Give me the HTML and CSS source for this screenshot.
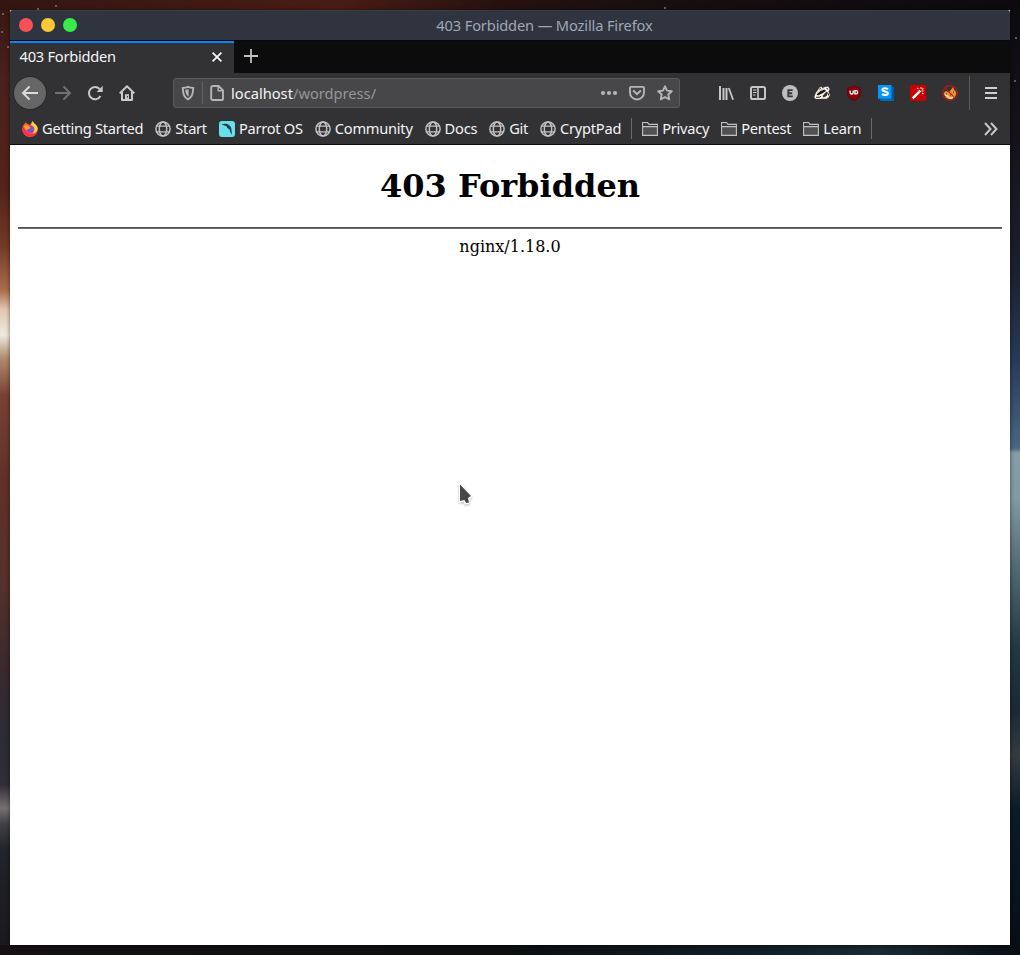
FILE: index.html
```html
<!DOCTYPE html>
<html lang="en">
<head>
<meta charset="utf-8">
<title>403 Forbidden</title>
<link rel="stylesheet" href="styles.css">
</head>
<body>
<svg class="defs" width="0" height="0">
  <symbol id="globe" viewBox="0 0 16 16"><g fill="none" stroke="#c2c2c3" stroke-width="1.5"><circle cx="8" cy="8" r="7.1"/><ellipse cx="8" cy="8" rx="3.7" ry="7"/><path d="M1.7 5.2h12.6M1.7 10.8h12.6" stroke-width="1.3"/></g></symbol>
  <symbol id="folder" viewBox="0 0 16 16"><path d="M.6 14.4V1.6h5l1.2 1.8h8.6v11zM.6 5.6h14.8" fill="#505051" stroke="#c2c2c3" stroke-width="1.1"/><path d="M1.2 2.2h4l1.2 1.8h8.4v1H1.2z" fill="#38383a"/></symbol>
</svg>
<div class="desktop">
  <i class="star s1"></i><i class="star s2"></i><i class="star s3"></i><i class="star s4"></i><i class="star s5"></i><i class="star s6"></i><i class="star s7"></i><i class="star s8"></i>
  <main class="window">
    <header class="titlebar">
      <div class="lights"><i class="red"></i><i class="yellow"></i><i class="green"></i></div>
      <span class="title">403 Forbidden — Mozilla Firefox</span>
    </header>
    <div class="tabs">
      <div class="tab"><span class="tabname">403 Forbidden</span>
        <svg class="close" width="12" height="12" viewBox="0 0 12 12"><path d="M1.6 1.6l8.8 8.8m0-8.8l-8.8 8.8" stroke="#f5f5f5" stroke-width="1.8"/></svg></div>
      <svg class="plus" width="16" height="16" viewBox="0 0 16 16"><path d="M1 8h14M8 1v14" stroke="#c0c0c0" stroke-width="1.8"/></svg>
    </div>
    <nav class="toolbar">
      <span class="back"><svg width="18" height="16" viewBox="0 0 18 16"><path d="M17 8H2.2M8.6 1.4L2 8l6.6 6.6" fill="none" stroke="#dadada" stroke-width="2"/></svg></span>
      <svg class="forward" width="18" height="16" viewBox="0 0 18 16"><path d="M1 8h14.8M9.4 1.4L16 8l-6.6 6.6" fill="none" stroke="#727273" stroke-width="2"/></svg>
      <svg class="reload" width="16" height="16" viewBox="0 0 16 16"><path d="M13.4 11.1A6.1 6.1 0 1 1 12.5 4" fill="none" stroke="#c9c9ca" stroke-width="2"/><path d="M15.7.8v6.1H9.6z" fill="#c9c9ca"/></svg>
      <svg class="home" width="16" height="16" viewBox="0 0 16 16"><path d="M.7 8.4L8 1.2l7.3 7.2M3 7v8h10V7" fill="none" stroke="#c9c9ca" stroke-width="2" stroke-linejoin="round"/><path d="M6 9.2h4V15H6z" fill="#c9c9ca"/><path d="M8 11h1v1.5H8z" fill="#323234"/></svg>
      <div class="url">
        <svg class="shield" width="14" height="16" viewBox="0 0 14 16"><path d="M7 1.8c2 .8 3.5 1 5.2 1.1C12.2 8.8 11 12.4 7 14.3 3 12.4 1.8 8.8 1.8 2.9 3.5 2.8 5 2.6 7 1.8z" fill="none" stroke="#b5b5b6" stroke-width="1.9"/><path d="M7.600 4.200v7.500C5.100 10.100 4.300 8 4.200 4.800z" fill="#b5b5b6"/></svg>
        <i class="urlsep"></i>
        <svg class="page" width="14" height="16" viewBox="0 0 14 16"><path d="M2.800 1h5.800L13 5.400v8a1.600 1.600 0 0 1-1.600 1.600H2.800A1.600 1.600 0 0 1 1.200 13.400V2.600A1.600 1.600 0 0 1 2.800 1z" fill="none" stroke="#b5b5b6" stroke-width="1.900"/><path d="M8.200 1v4.800H13" fill="none" stroke="#b5b5b6" stroke-width="1.400"/></svg>
        <span class="address">localhost<em>/wordpress/</em></span>
        <svg class="dots" width="18" height="16" viewBox="0 0 18 16"><g fill="#b5b5b6"><circle cx="3" cy="8" r="2.100"/><circle cx="9" cy="8" r="2.100"/><circle cx="15" cy="8" r="2.100"/></g></svg>
        <svg class="pocket" width="16" height="16" viewBox="0 0 16 16"><path d="M2 1.900h12a1 1 0 0 1 1 1V7.500a7 7 0 0 1-14 0V2.900a1 1 0 0 1 1-1z" fill="none" stroke="#b5b5b6" stroke-width="1.900"/><path d="M4.700 6L8 9.200 11.300 6" fill="none" stroke="#b5b5b6" stroke-width="2" stroke-linecap="round"/></svg>
        <svg class="favorite" width="16" height="16" viewBox="0 0 16 16"><path d="M8 1.300l2.050 4.300 4.750.6-3.500 3.300.95 4.800L8 12l-4.250 2.300.95-4.800L1.200 6.200l4.750-.6z" fill="none" stroke="#b5b5b6" stroke-width="1.900" stroke-linejoin="round"/></svg>
      </div>
      <div class="extensions">
        <svg width="16" height="16" viewBox="0 0 16 16"><path d="M2 1v14M5.500 3v12M8.500 3v12" stroke="#c6c6c7" stroke-width="2"/><path d="M10.800 3l4.300 11.700" stroke="#c6c6c7" stroke-width="1.800"/></svg>
        <svg width="16" height="16" viewBox="0 0 16 16"><rect x="1" y="2" width="14" height="12" rx="1.600" fill="none" stroke="#c6c6c7" stroke-width="2"/><path d="M8 2v12" stroke="#c6c6c7" stroke-width="1.600"/><path d="M3 5h3.500M3 7.500h3.500M3 10h2.500" stroke="#c6c6c7"/></svg>
        <svg width="16" height="16" viewBox="0 0 16 16"><circle cx="8" cy="8" r="8" fill="#bdbdbe"/><path d="M10.700 5.100H6.300v6.300h4.500M6.300 8.200h3.900" fill="none" stroke="#38383a" stroke-width="1.900"/></svg>
        <svg width="16" height="16" viewBox="0 0 16 16"><path d="M.5 11L2 7.500 4 5l1-2 2-1.500L8.500 3 11 2l3-.5L15.700 4 14.500 7l1.500 3-1.500 2.500L12 14H2l-1.500-1z" fill="#fbf5ef"/><path d="M2.500 9.500L6.500 6l4-1.500L12 6l-4 2.500-4 2z" fill="#1c1a19"/><path d="M8.500 11l4-4.500L14 8l-1.500 3-3 1.500z" fill="#35302d"/><path d="M5.300 4.200L7 2.900M12.500 3.400l1.700.8M2 12.300h3l2-1M14.500 8.500v2" fill="none" stroke="#2d2724" stroke-width="1"/><path d="M3 8l3-3 4-1.500M7 13.300h5" fill="none" stroke="#d2a582" stroke-width=".7"/></svg>
        <svg width="16" height="16" viewBox="0 0 16 16"><path d="M8 .5c2 1.300 4.200 2 6.500 2.200V8c0 4.200-3 6.300-6.500 7.800C4.500 14.300 1.500 12.200 1.500 8V2.700C3.800 2.500 6 1.800 8 .5z" fill="#850008" stroke="#620007" stroke-width=".6"/><path d="M4.200 5.500v2.200c0 1.700 3 1.700 3 0V5.500" fill="none" stroke="#fff" stroke-width="1.300"/><path d="M8.900 5.700h1.300c2 0 2 3.200 0 3.200H8.900z" fill="none" stroke="#fff" stroke-width="1.300"/></svg>
        <svg width="16" height="16" viewBox="0 0 16 16"><path d="M2 2h14v14H3L0 13z" fill="#006bb0"/><path d="M13 0l3 3v13l-3-3z" fill="#0058a6"/><path d="M0 0h13.500v13.500H0z" fill="#0796ff"/><path d="M10 4.300C9 2.800 4.500 2.600 4.500 4.800c0 2.300 5.400 1.200 5.400 3.500 0 2.200-4.500 2.200-5.800.5" fill="none" stroke="#fff" stroke-width="2"/></svg>
        <svg width="16" height="16" viewBox="0 0 16 16"><rect width="16" height="16" rx=".7" fill="#cc0000"/><path d="M2.700 13.300l6.500-6.500" stroke="#fff" stroke-width="2.500"/><path d="M7 3l1.500 1M11 2v2M12 4.500l1.500-1M11.500 6h2M12 8l1.500 1" stroke="#f3dede" stroke-width="1.200"/><path d="M9 5.300l1.700 1.700" stroke="#fff" stroke-width="1.500"/></svg>
        <svg width="16" height="16" viewBox="0 0 16 16"><path d="M1.500 8.500L3.500 6l2.500 1 2-1 3-4 1 2.500L14.500 8l-1.500 4-4 2.500-5-1.500z" fill="#e89332"/><path d="M3 10l2 .5 2 2.500h3l2-2" fill="none" stroke="#f5d9b9" stroke-width="1.500"/><path d="M4 9h1M8 10h1M11 7l1 .5" stroke="#54270d"/><circle cx="8" cy="8" r="7.400" fill="none" stroke="#bb1715" stroke-width="1.100"/><path d="M2.800 2.800l10.400 10.400" stroke="#bf1714" stroke-width="1.100"/></svg>
      </div>
      <i class="menusep"></i>
      <svg class="menu" width="12" height="14" viewBox="0 0 12 14"><path d="M0 2h12M0 7h12M0 12h12" stroke="#d0d0d1" stroke-width="2"/></svg>
    </nav>
    <nav class="bookmarks">
      <a><svg viewBox="0 0 16 16"><path d="M11 0c-2 1.500-2.200 3-3 4C5 3 4 2 4 1 2 3 .2 5 .2 8.500a7.800 7.500 0 0 0 15.600 0C16 5.600 14 4 12.500 3 11.300 2.200 11 1 11 0z" fill="#ff5934"/><path d="M10.800 0C10 2 9 3 9 4c4 1 4.500 6 1.500 8 3 .5 5.200-2 5.100-5-.4-2.500-2-3.500-3.200-4.500C11.500 1.700 11 1 10.800 0z" fill="#ffd33c"/><path d="M.5 7.500c0 4.300 3.200 8.200 8 8 3.800-.2 6-2.500 6.900-4.500-2.200 2-4.400 2.700-7.400 2C4 12 3 9 3 5z" fill="#ff2a4d"/><circle cx="8.400" cy="8.300" r="3.600" fill="#8050ce"/><path d="M1.800 5l3-1 2 1 2 2-2 1-2 1-2-1z" fill="#ff9b27"/></svg><span>Getting Started</span></a>
      <a><svg><use href="#globe"/></svg><span>Start</span></a>
      <a><svg viewBox="0 0 16 16"><rect width="16" height="16" rx="3" fill="#69dfed"/><path d="M2.500 3.500C4.500 2.300 8 2.300 10 4c2 1.500 2.500 3.300 2.500 5.500L13 14l-2-3.500-.7-2.500L8.500 7.300 7.500 5.200z" fill="#253d45"/></svg><span>Parrot OS</span></a>
      <a><svg><use href="#globe"/></svg><span>Community</span></a>
      <a><svg><use href="#globe"/></svg><span>Docs</span></a>
      <a><svg><use href="#globe"/></svg><span>Git</span></a>
      <a><svg><use href="#globe"/></svg><span>CryptPad</span></a>
      <i class="booksep"></i>
      <a><svg><use href="#folder"/></svg><span>Privacy</span></a>
      <a><svg><use href="#folder"/></svg><span>Pentest</span></a>
      <a><svg><use href="#folder"/></svg><span>Learn</span></a>
      <i class="booksep"></i>
      <svg class="overflow" viewBox="0 0 16 16"><path d="M2 2l5.500 6L2 14M8 2l5.500 6L8 14" fill="none" stroke="#c6c6c7" stroke-width="2"/></svg>
    </nav>
    <section class="content"><h1>403 Forbidden</h1><hr><p>nginx/1.18.0</p></section>
  </main>
  <svg class="cursor" width="20" height="26" viewBox="0 0 20 26"><path d="M4 3v16.500l4-1 1.500 3 3-.5.5-4.500 2-2z" fill="#fff" stroke="#fff" stroke-width="2" stroke-linejoin="round"/><path d="M4 2.500l11 11.500-3 2 1 4.500-3 .5-1.500-3L4 19z" fill="#474747"/></svg>
</div>
</body>
</html>
```
FILE: styles.css
```css
* { box-sizing: border-box; }
body { margin: 0; font: 14.67px "Noto Sans", sans-serif; }
svg { display: block; flex: none; }
.defs { position: absolute; }
.desktop { position: relative; width: 1020px; height: 955px; padding: 10px; overflow: hidden;
  background:
    linear-gradient(90deg, #341511, #481c14 340px, #26110f 500px, #150e0f 690px, #0c0a0e) top / 100% 10px no-repeat,
    linear-gradient(90deg, #141014, #0c0e0f 500px, #101d27 750px, #1a2932 880px, #080e14) bottom / 100% 10px no-repeat,
    linear-gradient(180deg, #381612, #4a211c 80px, #54221a 190px, #713a26 245px, #a96c4b 290px, #e2c9b3 310px, #eee9df 335px, #b28b71 358px, #784233 395px, #623029 480px, #55302c 590px, #39292e 670px, #2c2c37 740px, #302e37 785px, #777072 808px, #3f3e42 825px, #22242b 850px, #18171c 955px) left / 10px 100% no-repeat,
    linear-gradient(180deg, #0c0b10, #151219 130px, #1a202e 270px, #283a58 360px, #486680 448px, #859da7 453px, #8099a5 500px, #617983 545px, #455b65 590px, #233641 650px, #192935 710px, #343b3f 755px, #0a1b29 810px, #07131d 900px, #080c12) right / 10px 100% no-repeat;
}
.star { position: absolute; width: 2px; height: 2px; background: #b4a39b; opacity: .65; border-radius: 50%; }
.s1 { left: 2px; top: 13px; } .s2 { left: 1px; top: 31px; } .s3 { left: 7px; top: 46px; }
.s4 { left: 37px; top: 8px; } .s5 { left: 55px; top: 5px; } .s6 { left: 664px; top: 7px; }
.s7 { left: 1015px; top: 37px; } .s8 { left: 1014px; top: 80px; }
.window { width: 1000px; height: 935px; overflow: hidden; background: #fff; border-radius: 3px 3px 0 0; box-shadow: 0 1px 4px rgba(0,0,0,.55); }
.titlebar { height: 30px; display: grid; grid-template-columns: 100px 1fr 115px; align-items: center; background: #2f343f; border-top: 1px solid #363c4a; padding-bottom: 1px; color: #a0a7b4; }
.lights { display: flex; gap: 8px; padding-left: 9px; }
.lights i { width: 14px; height: 14px; border-radius: 50%; }
.red { background: #f74f57; } .yellow { background: #fdc736; } .green { background: #38eb49; }
.title { text-align: center; line-height: 20px; padding: 0 0 1px 69px; margin-right: -15px; letter-spacing: -.15px; white-space: nowrap; }
.tabs { height: 33px; display: flex; background: #0c0c0d; border-top: 1px solid #08090a; }
.tab { width: 224px; height: 32px; display: flex; align-items: center; justify-content: space-between; padding: 0 11px 0 9.5px; background: #323234; border-top: 2px solid #0a84ff; color: #f5f5f6; }
.tabname { line-height: 20px; padding-bottom: 4px; letter-spacing: -.25px; }
.close { margin-bottom: 2px; }
.plus { margin: 7px 0 0 9px; }
.toolbar { height: 40px; display: flex; align-items: center; background: #323234; }
.back { width: 32px; height: 32px; margin-left: 4px; border-radius: 50%; background: #666667; display: flex; align-items: center; justify-content: center; box-shadow: 0 0 0 1px #29292b; }
.forward { margin-left: 8px; } .reload { margin-left: 15px; } .home { margin-left: 16px; }
.url { width: 507px; height: 30px; margin-left: 38px; display: flex; align-items: center; background: #474749; border: 1px solid #5b5b5d; border-radius: 3px; }
.shield { margin-left: 7px; } .urlsep { width: 1px; height: 22px; margin-left: 7px; background: #616169; }
.page { margin-left: 7px; }
.address { flex: 1; margin-left: 7px; line-height: 20px; color: #f4f4f5; }
.address em { font-style: normal; color: #969697; }
.pocket { margin-left: 11px; } .favorite { margin: 0 6px 0 12px; }
.extensions { display: flex; margin-left: 38px; gap: 16px; align-items: center; }
.menusep { width: 1px; height: 34px; margin-left: 11px; background: #5c5c5d; }
.menu { margin-left: 15px; }
.bookmarks { height: 32px; display: flex; align-items: center; padding: 0 12px; gap: 12px; background: #323234; border-bottom: 1px solid #0c0c0d; color: #f3f3f4; }
.bookmarks a { display: flex; align-items: center; gap: 4px; line-height: 20px; letter-spacing: -.27px; white-space: nowrap; }
.bookmarks span { padding-bottom: 2px; }
.bookmarks svg { width: 16px; height: 16px; }
.booksep { width: 1px; height: 21px; margin: 0 -2px; background: #6a6a6b; }
.bookmarks .overflow { margin-left: auto; margin-right: -1px; }
.content { height: 800px; padding: 0 8px; text-align: center; font: 16px "DejaVu Serif", serif; overflow: hidden; }
h1 { font-size: 32px; line-height: 38px; margin: 22px 0; }
hr { margin: 0; height: 2px; border: 0; background: #6b6b6b; border-top: 1px solid #555; }
p { margin: 8px 0; line-height: 19px; }
.cursor { position: absolute; left: 456px; top: 482px; filter: drop-shadow(0 1px 1px rgba(0,0,0,.3)); }
```
